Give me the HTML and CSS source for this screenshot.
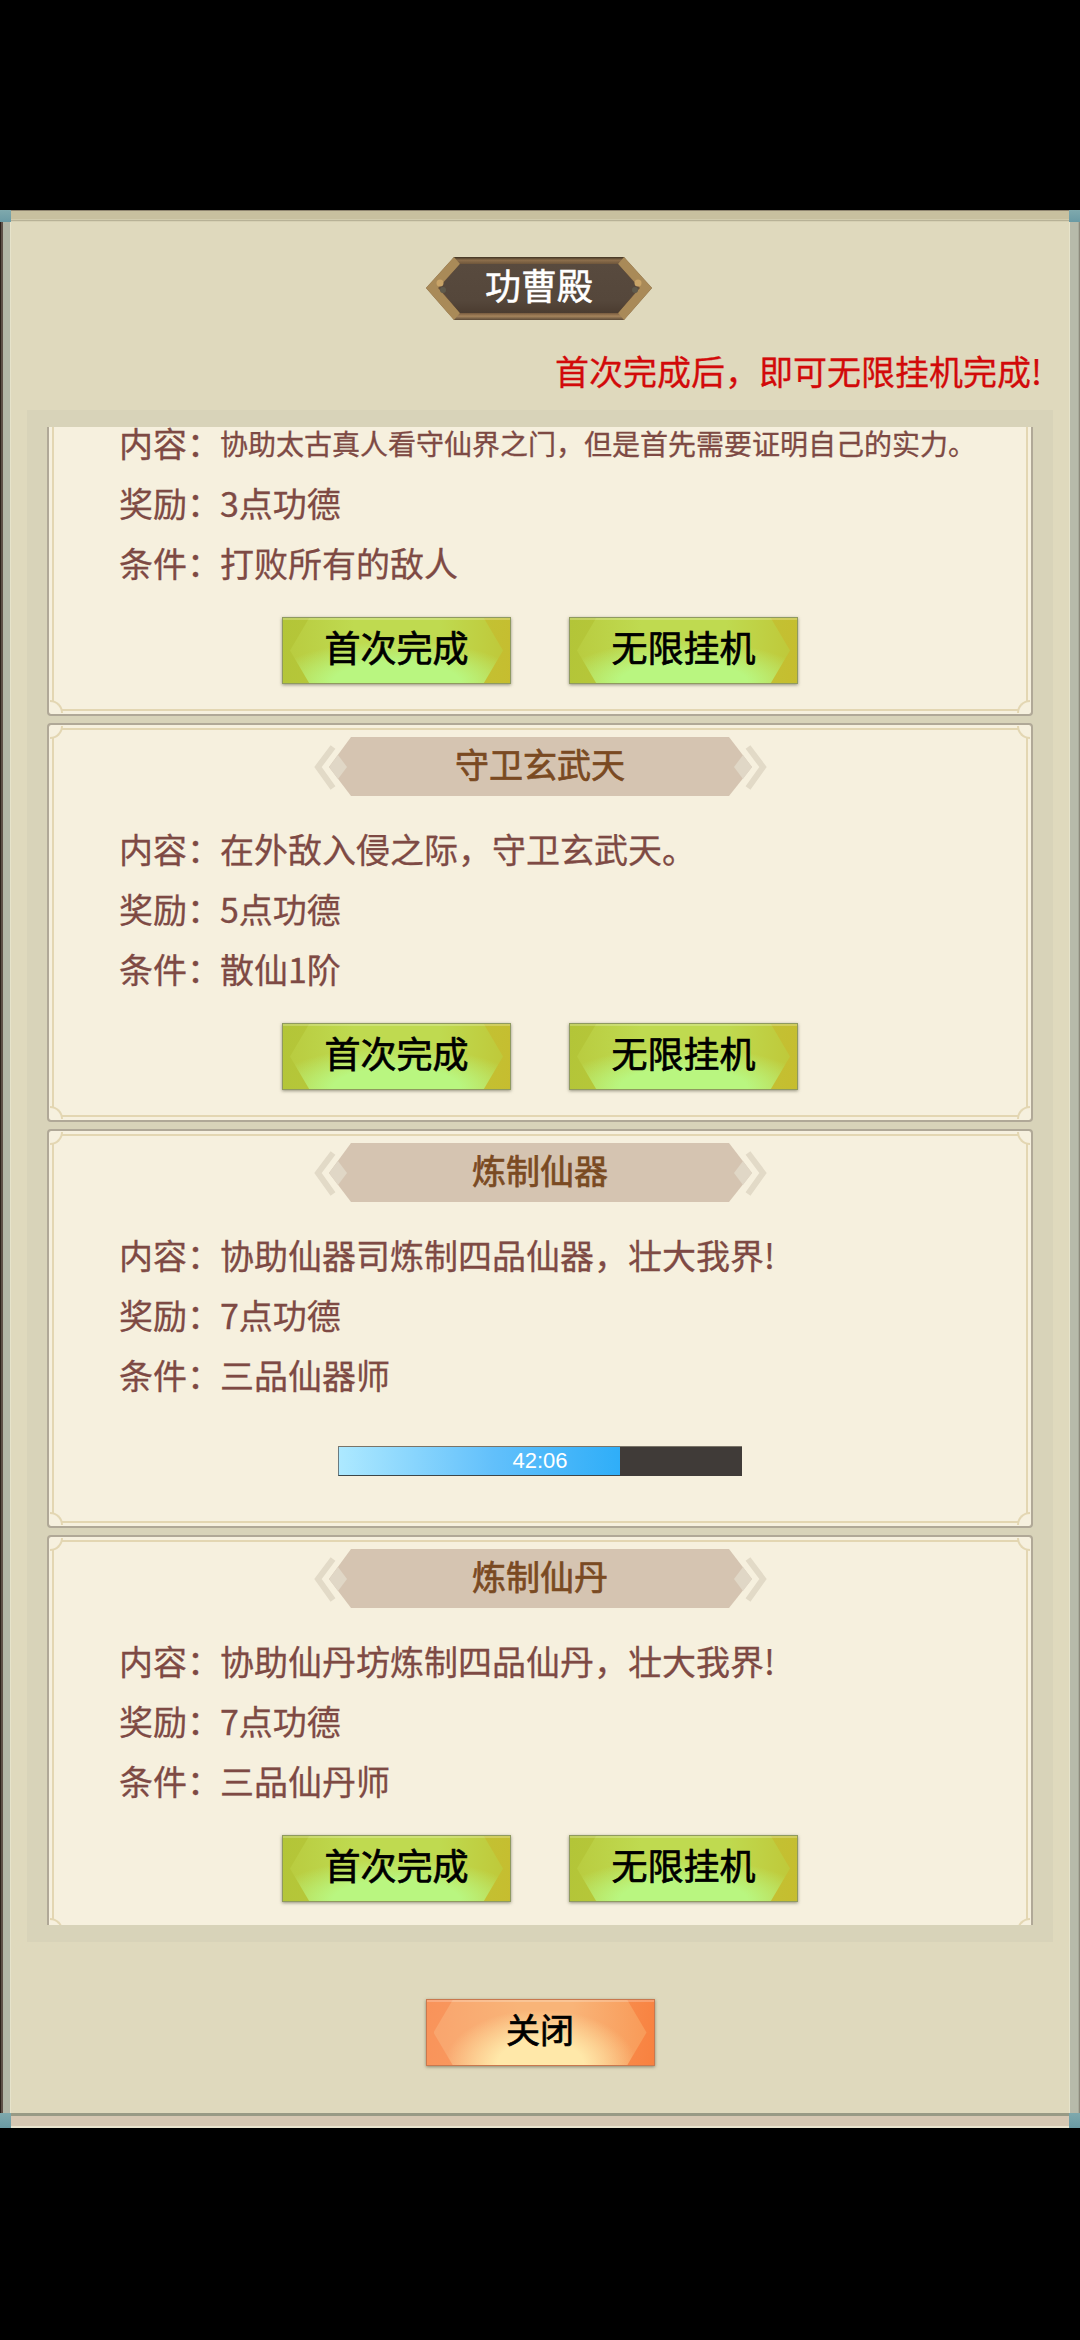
FILE: index.html
```html
<!DOCTYPE html>
<html lang="zh-CN">
<head>
<meta charset="utf-8">
<title>功曹殿</title>
<link rel="stylesheet" href="styles.css">
</head>
<body>
<main class="panel">
  <div class="band band-top"><i class="stud"></i><i class="stud"></i></div>
  <div class="panel-body">
    <header class="badge">
      <svg class="badge-art" viewBox="0 0 226 63" aria-hidden="true">
        <defs>
          <linearGradient id="rim" x1="0" y1="0" x2="0" y2="1">
            <stop offset="0" stop-color="#3f3222"/>
            <stop offset=".05" stop-color="#8d6f4c"/>
            <stop offset=".11" stop-color="#6f563b"/>
            <stop offset=".88" stop-color="#6f5339"/>
            <stop offset=".94" stop-color="#a5845c"/>
            <stop offset="1" stop-color="#5b4a38"/>
          </linearGradient>
          <linearGradient id="face" x1="0" y1="0" x2="0" y2="1">
            <stop offset="0" stop-color="#584a3e"/>
            <stop offset=".75" stop-color="#55473b"/>
            <stop offset="1" stop-color="#4b3c30"/>
          </linearGradient>
        </defs>
        <polygon points="0,31 28,0 198,0 226,31 198,63 28,63" fill="url(#rim)"/>
        <polygon points="0,31 28,0 34,7 12,31 34,56 28,63" fill="#a98a58"/>
        <polygon points="226,31 198,0 192,7 214,31 192,56 198,63" fill="#a98a58"/>
        <polygon points="13,31 34,7 192,7 213,31 192,56 34,56" fill="url(#face)"/>
        <circle cx="14" cy="26" r="3.5" fill="#c9a468"/>
        <circle cx="212" cy="26" r="3.5" fill="#c9a468"/>
        <circle cx="17" cy="33" r="3" fill="#5f5a4c"/>
        <circle cx="209" cy="33" r="3" fill="#5f5a4c"/>
      </svg>
      <h1 class="badge-text">功曹殿</h1>
    </header>
    <p class="hint">首次完成后，即可无限挂机完成!</p>
    <section class="well">
      <div class="viewport">
        <div class="list">

          <article class="card">
            <i class="corner tl"></i><i class="corner tr"></i><i class="corner bl"></i><i class="corner br"></i>
            <div class="title"></div>
            <dl class="info">
              <div><dt>内容：</dt><dd class="fit">协助太古真人看守仙界之门，但是首先需要证明自己的实力。</dd></div>
              <div><dt>奖励：</dt><dd>3点功德</dd></div>
              <div><dt>条件：</dt><dd>打败所有的敌人</dd></div>
            </dl>
            <div class="actions">
              <button class="btn green">首次完成</button>
              <button class="btn green">无限挂机</button>
            </div>
          </article>

          <article class="card">
            <i class="corner tl"></i><i class="corner tr"></i><i class="corner bl"></i><i class="corner br"></i>
            <div class="title">
              <svg class="title-art" viewBox="0 0 453 59" aria-hidden="true"><use href="#ribbon"/></svg>
              <h2>守卫玄武天</h2>
            </div>
            <dl class="info">
              <div><dt>内容：</dt><dd>在外敌入侵之际，守卫玄武天。</dd></div>
              <div><dt>奖励：</dt><dd>5点功德</dd></div>
              <div><dt>条件：</dt><dd>散仙1阶</dd></div>
            </dl>
            <div class="actions">
              <button class="btn green">首次完成</button>
              <button class="btn green">无限挂机</button>
            </div>
          </article>

          <article class="card">
            <i class="corner tl"></i><i class="corner tr"></i><i class="corner bl"></i><i class="corner br"></i>
            <div class="title">
              <svg class="title-art" viewBox="0 0 453 59" aria-hidden="true"><use href="#ribbon"/></svg>
              <h2>炼制仙器</h2>
            </div>
            <dl class="info">
              <div><dt>内容：</dt><dd>协助仙器司炼制四品仙器，壮大我界!</dd></div>
              <div><dt>奖励：</dt><dd>7点功德</dd></div>
              <div><dt>条件：</dt><dd>三品仙器师</dd></div>
            </dl>
            <div class="actions">
              <div class="progress">
                <div class="progress-fill" style="width:69.8%"></div>
                <span class="progress-text">42:06</span>
              </div>
            </div>
          </article>

          <article class="card">
            <i class="corner tl"></i><i class="corner tr"></i><i class="corner bl"></i><i class="corner br"></i>
            <div class="title">
              <svg class="title-art" viewBox="0 0 453 59" aria-hidden="true"><use href="#ribbon"/></svg>
              <h2>炼制仙丹</h2>
            </div>
            <dl class="info">
              <div><dt>内容：</dt><dd>协助仙丹坊炼制四品仙丹，壮大我界!</dd></div>
              <div><dt>奖励：</dt><dd>7点功德</dd></div>
              <div><dt>条件：</dt><dd>三品仙丹师</dd></div>
            </dl>
            <div class="actions">
              <button class="btn green">首次完成</button>
              <button class="btn green">无限挂机</button>
            </div>
          </article>

        </div>
      </div>
    </section>
    <div class="footer">
      <button class="btn orange">关闭</button>
    </div>
  </div>
  <div class="band band-bottom"><i class="stud"></i><i class="stud"></i></div>
</main>

<svg class="defs" width="0" height="0" aria-hidden="true">
  <defs>
    <g id="ribbon">
      <polyline points="19,10 4,30 19,51" fill="none" stroke="#e2dac7" stroke-width="6"/>
      <polyline points="434,10 449,30 434,51" fill="none" stroke="#e2dac7" stroke-width="6"/>
      <polygon points="15,30 37,0 415,0 438,30 415,59 37,59" fill="#d5c4b1"/>
      <polygon points="15,30 24,18 33,30 24,42" fill="#e0d7c6"/>
      <polygon points="420,30 429,18 438,30 429,42" fill="#e0d7c6"/>
    </g>
  </defs>
</svg>
</body>
</html>
```

FILE: styles.css
```css
* { box-sizing: border-box; }

html, body {
  margin: 0;
  padding: 0;
  background: #000;
}

body {
  width: 1080px;
  height: 2340px;
  padding-top: 210px;
  font-family: "Noto Sans CJK SC", "Liberation Sans", sans-serif;
}

.defs { position: absolute; }

.panel {
  height: 1918px;
  display: flex;
  flex-direction: column;
  background: #dfd9bd;
  box-shadow:
    inset 1px 0 #2c201b, inset -1px 0 #8d8a7c,
    inset 3px 0 #5e5048, inset -2px 0 #a9ab9c,
    inset 10px 0 #b2b6a7, inset -10px 0 #b7baaa,
    inset 11px 0 #e6e3cb, inset -11px 0 #e6e3cb;
}

.band {
  display: flex;
  justify-content: space-between;
  flex: none;
}

.band-top {
  height: 12px;
  background: linear-gradient(#8f8570 0 1px, #c8c09f 1px 9px, #d2ccae 9px 10px, #b7b196 10px 11px, #d6d0b3 11px);
}

.band-bottom {
  height: 15px;
  background: linear-gradient(#989a85 0 3px, #d5c7b2 3px 13px, #e9e4cf 13px);
}

.stud {
  width: 11px;
  background: linear-gradient(#7fa9ad, #6a9aa4);
}

.panel-body {
  flex: 1;
  display: flex;
  flex-direction: column;
  min-height: 0;
  padding-top: 35px;
}

.badge {
  position: relative;
  flex: none;
  width: 226px;
  height: 63px;
  margin: 0 auto 0 426px;
  padding-bottom: 10px;
  display: flex;
  align-items: center;
  justify-content: center;
}

.badge-art {
  position: absolute;
  inset: 0;
  width: 100%;
  height: 100%;
}

.badge-text {
  position: relative;
  margin: 0;
  font-size: 36px;
  line-height: 1;
  font-weight: 400;
  -webkit-text-stroke: .5px #fff;
  color: #fff;
}

.hint {
  flex: none;
  margin: 31px 0 19px;
  padding-right: 38px;
  text-align: right;
  font-size: 34px;
  line-height: 40px;
  -webkit-text-stroke: .3px #d20a0a;
  color: #d20a0a;
}

.well {
  flex: none;
  height: 1532px;
  margin: 0 27px;
  padding: 17px 20px;
  background: #d8d3b9;
}

.viewport {
  height: 100%;
  overflow: hidden;
}

.list {
  display: flex;
  flex-direction: column;
  gap: 7px;
  margin-top: -110px;
}

.card {
  position: relative;
  flex: none;
  height: 399px;
  padding-top: 12px;
  background: #f6f0de;
  border: 2px solid #b0a897;
  border-radius: 4px;
  background-clip: padding-box;
}

.card::before {
  content: "";
  position: absolute;
  inset: 3px;
  border: 2px solid #e3d6b2;
  pointer-events: none;
}

.corner {
  position: absolute;
  width: 13px;
  height: 13px;
  background: #f6f0de;
  border: 0 solid #e3d6b2;
}
.corner.tl { top: 1px; left: 1px; border-width: 0 2px 2px 0; border-bottom-right-radius: 13px; }
.corner.tr { top: 1px; right: 1px; border-width: 0 0 2px 2px; border-bottom-left-radius: 13px; }
.corner.bl { bottom: 1px; left: 1px; border-width: 2px 2px 0 0; border-top-right-radius: 13px; }
.corner.br { bottom: 1px; right: 1px; border-width: 2px 0 0 2px; border-top-left-radius: 13px; }

.title {
  position: relative;
  width: 453px;
  height: 59px;
  margin: 0 auto;
  padding-bottom: 6px;
  display: flex;
  align-items: center;
  justify-content: center;
}

.title-art {
  position: absolute;
  inset: 0;
  width: 100%;
  height: 100%;
}

.title h2 {
  position: relative;
  margin: 0;
  font-size: 34px;
  line-height: 1;
  font-weight: 400;
  -webkit-text-stroke: .7px #7a4a22;
  color: #7a4a22;
}

.info {
  margin: 23px 0 24px;
  padding-left: 70px;
  font-size: 34px;
  line-height: 60px;
  -webkit-text-stroke: .3px #7e4a44;
  color: #7e4a44;
}

.info div {
  display: flex;
  height: 60px;
  white-space: nowrap;
}

.info dt { flex: none; width: 101px; }
.info dd { margin: 0; }
.info dd.fit { font-size: 28px; }

.actions {
  height: 67px;
  display: flex;
  justify-content: center;
  gap: 58px;
}

.btn {
  position: relative;
  z-index: 0;
  width: 229px;
  height: 67px;
  padding: 0 0 9px;
  border: 1px solid #8f9a5f;
  box-shadow: 0 1px 3px rgba(70, 70, 50, .55);
  font-family: inherit;
  font-size: 36px;
  font-weight: 400;
  -webkit-text-stroke: .7px #000;
  color: #000;
  overflow: hidden;
}

.btn::before {
  content: "";
  position: absolute;
  z-index: -1;
  inset: 0;
  margin: 0 7px;
  clip-path: polygon(0 50%, 9% 0, 91% 0, 100% 50%, 91% 100%, 9% 100%);
}

.btn::after {
  content: "";
  position: absolute;
  z-index: -1;
  inset: 0;
  height: 2px;
  background: rgba(255, 255, 255, .22);
}

.btn.green {
  background: linear-gradient(100deg, #b3c538 0%, #bccb3c 50%, #c6bd2f 100%);
}

.btn.green::before {
  background:
    radial-gradient(ellipse 60% 65% at 50% 100%, #b9f680 0 50%, rgba(185, 246, 128, 0) 100%),
    linear-gradient(90deg, #b9cc40, #bfda50 30%, #bfda50 70%, #bfc93a);
}

.btn.orange {
  font-size: 34px;
  background: linear-gradient(100deg, #f9935a 0%, #f9a064 50%, #f8813f 100%);
  border-color: #c9784e;
}

.btn.orange::before {
  background:
    radial-gradient(ellipse 45% 85% at 50% 100%, #ffe8a9 0 45%, rgba(255, 232, 169, 0) 100%),
    linear-gradient(90deg, #f9a56e, #f9b478 40%, #f9b478 65%, #f89a58);
}

.progress {
  position: relative;
  width: 404px;
  height: 30px;
  margin-top: 17px;
  background: #403b38;
  border-top: 1px solid #7a7468;
}

.progress-fill {
  height: 100%;
  background: linear-gradient(90deg, #ade9ff 0%, #62c0fb 55%, #2faef8 100%);
  border-left: 1px solid #6b7b80;
  border-bottom: 1px solid #3d4648;
}

.progress-text {
  position: absolute;
  inset: 0;
  text-align: center;
  font-family: "Liberation Sans", sans-serif;
  font-size: 22px;
  line-height: 27px;
  color: #fff;
}

.footer {
  flex: none;
  display: flex;
  justify-content: center;
  margin-top: 57px;
}
```
